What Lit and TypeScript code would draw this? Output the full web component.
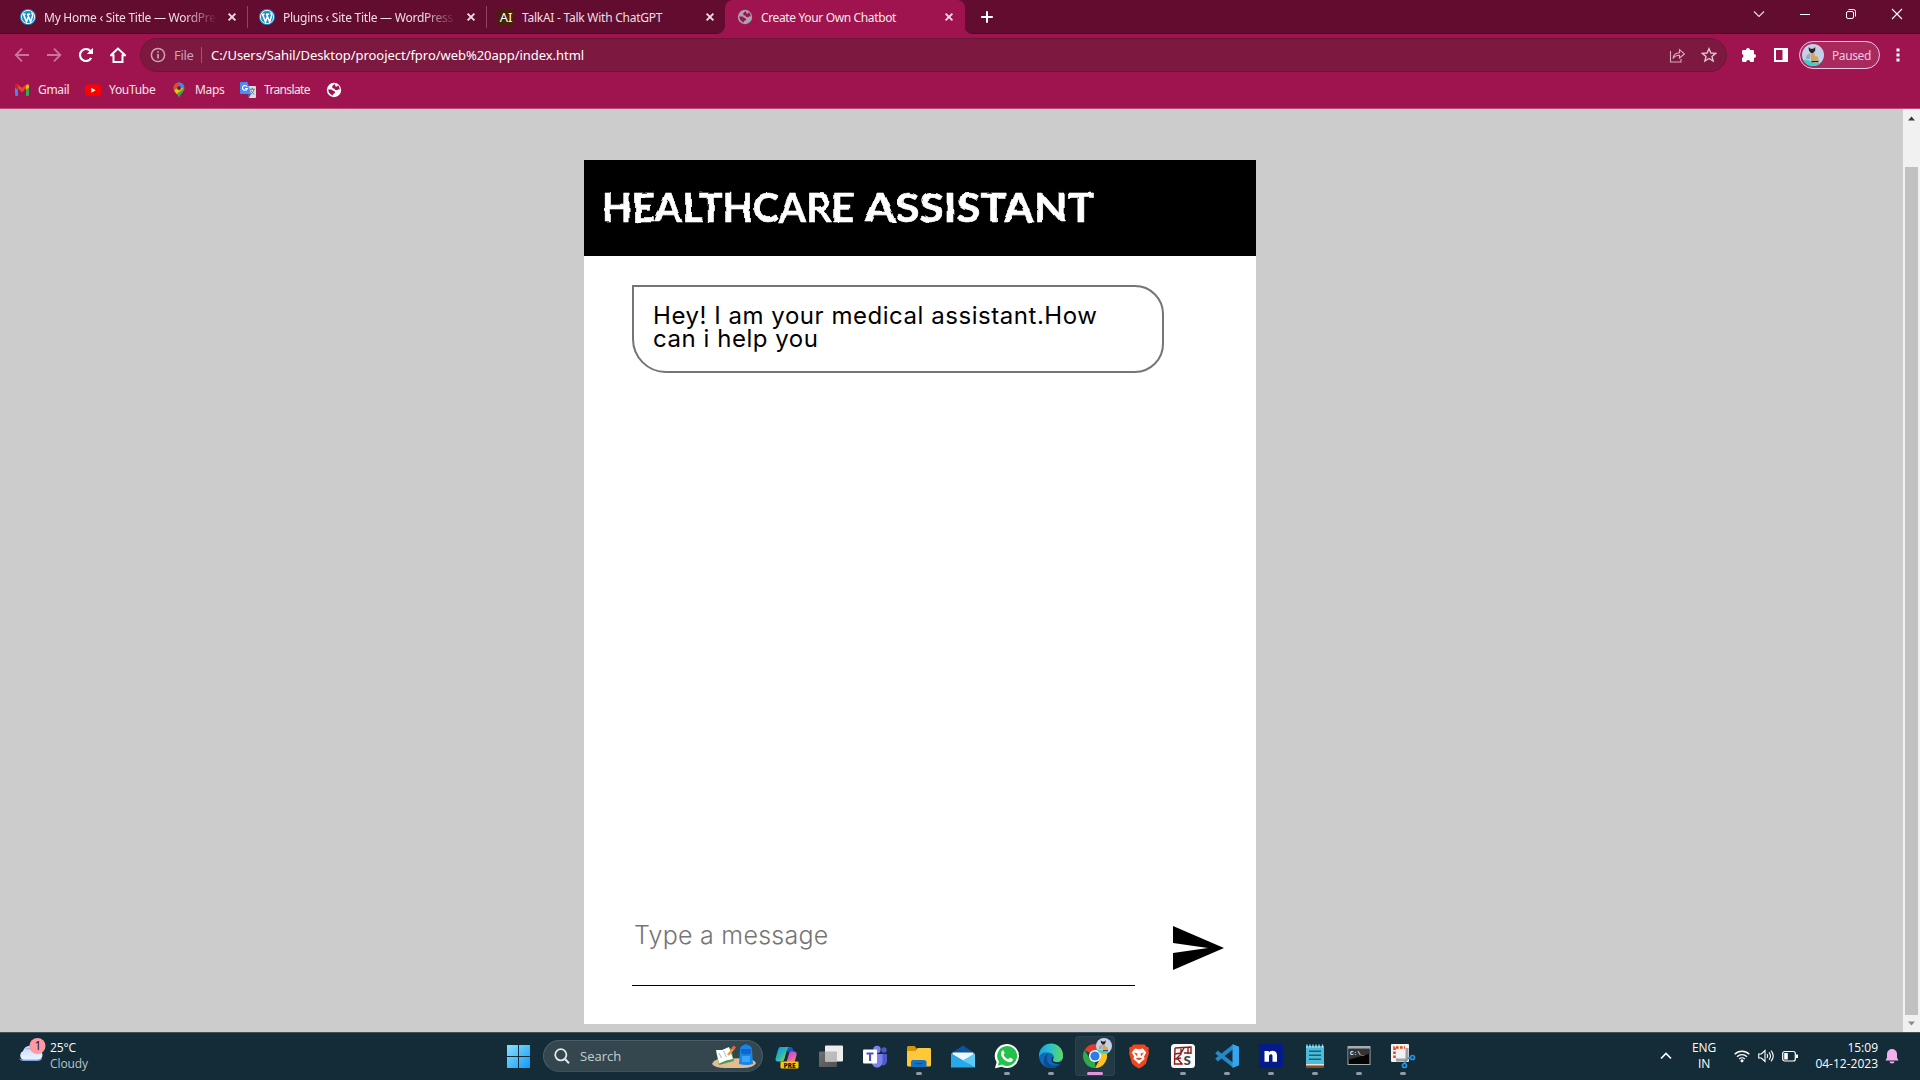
import { LitElement, html, svg, css } from "lit";
import { customElement } from "lit/decorators.js";
import { classMap } from "lit/directives/class-map.js";

const wordpress = html`<svg width="16" height="16" viewBox="0 0 16 16"><circle cx="8" cy="8" r="8" fill="#1d8fc6"/><circle cx="8" cy="8" r="6.600" fill="none" stroke="#fff" stroke-width=".9"/><path d="M2.600 5.200h3M7 5.200h3.200M3.500 5.400l3 7.400 2-5.600M7.600 5.400l3 7.400 2-6c.5-1.600-.9-2-.6-3.300" fill="none" stroke="#fff" stroke-width="1.500"/></svg>`;
const aiIcon = html`<span class="ai">AI</span>`;
const globe = (bg: string, fg: string) => html`<svg width="16" height="16" viewBox="0 0 16 16"><circle cx="8" cy="8" r="7.200" fill="${bg}"/><path fill="${fg}" d="M9.300 2.200C7.600 2.400 6 3.600 6.200 5.200c.1 1 1 1.200 1.900 1.200.6 0 .6 1.400 1.500 1.700.9.300 2 .1 2.600-.5.600-.5 1.300-.4 1.500.2.200-2-.6-3.600-1.900-4.600-.2.900-.7 1.500-1.500 1.400-.9-.1-1.500-.6-1-2.400zM2.200 7.600c.1 3 1.900 5.100 4.600 5.900l.3-1.500c.9-.1 1.900-.8 1.900-1.800 0-.9-.7-1.100-1.500-1.200C6.700 8.900 6.500 7.700 5.200 7.500c-.9-.2-2-.1-3 .1z"/></svg>`;
const closeX = html`<svg class="x" width="16" height="16" viewBox="0 0 16 16"><path d="M4.600 4.600l6.800 6.800M11.400 4.600l-6.800 6.800" stroke="#f3dbe5" stroke-width="1.900"/></svg>`;

const avatar = (s: number) => html`<svg width="${s}" height="${s}" viewBox="0 0 22 22"><defs><clipPath id="av"><circle cx="11" cy="11" r="11"/></clipPath></defs><g clip-path="url(#av)"><path fill="#c5d0e8" d="M0 0h22v22H0z"/><path fill="#3fd0c4" d="M0 16q6-1 10 2t12-1v5H0z"/><path fill="#9aa8c4" d="M4 12l4-3v6H4z"/><path fill="#d0a765" d="M8.500 8h3.500l1 4 2.500.5 1.500 4.500H9z"/><path fill="#28231f" d="M6.500 3l2 1.800h2.800L13.200 3v3.700L11 9H9L7 6.800zM9.500 17h7v1.200h-7z"/></g></svg>`;

const folder = svg`<path fill="#d99409" d="M0 3.500C0 2.500.8 2 1.600 2h6l2 2.500V9H0z"/><path fill="#fdc93b" d="M0 7h8.500l2-3H22.600c.9 0 1.400.6 1.400 1.400V21c0 .8-.6 1.500-1.400 1.500H1.400C.6 22.500 0 21.800 0 21z"/><path fill="#1471c4" d="M4 23v-4.500c0-2 1-2.500 2.500-2.500h10c2 0 3 .7 3 2.500V23z"/><path fill="#0d4f94" d="M8 19h7.500v1.200H8z"/>`;

interface App { name: string; icon: unknown; running?: boolean; active?: boolean }
const apps: App[] = [
  { name: "copilot", icon: svg`<defs><linearGradient id="cp1" x2="1" y2="1"><stop stop-color="#178ee8"/><stop offset=".5" stop-color="#2ab9b0"/><stop offset="1" stop-color="#d9d526"/></linearGradient><linearGradient id="cp2" x2=".6" y2="1"><stop stop-color="#8b50e8"/><stop offset=".6" stop-color="#e65bb5"/><stop offset="1" stop-color="#f78b52"/></linearGradient></defs><path fill="#1856c0" d="M10 3h5.500c1.500 0 2 .8 2.400 2l1 3H13z"/><path fill="url(#cp1)" d="M5.500 3H14c-1.500 1-2 3-2.600 5l-2 7c-.5 1.700-1.200 2.500-3 2.500H2.500C.7 17.500.2 16 .6 14.500L3 6c.5-1.800 1-3 2.500-3z"/><path fill="url(#cp2)" d="M16 7.500h3c2.200 0 3 1.500 2.500 3.500L20 16.500c-.6 2-1.300 3-3 3H9.500c2-1 2.500-3 3-5l1.300-4.500c.4-1.500.8-2.500 2.200-2.500z"/><rect x="5.500" y="17.500" width="18" height="7" rx="1" fill="#fbc40e"/><text x="14.500" y="23.500" text-anchor="middle" font-size="6.600" font-weight="800" fill="#251c04" font-family="Open Sans,sans-serif">PRE</text>` },
  { name: "taskview", icon: svg`<defs><linearGradient id="tv" x2="1" y2="1"><stop stop-color="#6f6f6f"/><stop offset="1" stop-color="#515151"/></linearGradient></defs><rect x="0" y="7.500" width="18" height="15.500" rx="1" fill="url(#tv)"/><rect x="6" y="1.500" width="18" height="16" rx="1" fill="#ededed"/><path fill="#bcbcbc" d="M6 7.500h12v10H6z"/>` },
  { name: "teams", icon: svg`<circle cx="21" cy="6" r="2.700" fill="#5059c9"/><circle cx="14" cy="5.500" r="3.700" fill="#7b83eb"/><path fill="#5059c9" d="M17 10h7v6.500c0 3-2 5-5 5z"/><path fill="#7b83eb" d="M9 10h10.500v7.500c0 3.500-2.300 6-5.500 6s-5-2.500-5-5z"/><rect y="5.500" width="14" height="14" rx="1" fill="#fff"/><path fill="#4b53bc" d="M3.500 8.500h7v1.900H8.100V17H6v-6.600H3.500z"/>` },
  { name: "explorer", icon: folder, running: true },
  { name: "mail", icon: svg`<path fill="#0a559e" d="M0 9.500L12 1.500l12 8v4H0z"/><path fill="#f2f7fb" d="M1.500 8.500h21v2L12 17.500 1.500 10.500z"/><path fill="#1683d8" d="M0 9.500l12 7L0 23.500z"/><path fill="#28a8ea" d="M0 9.500L24 23.500H0z"/><path fill="#5cccf5" d="M24 9.500v14L11.500 16.500z"/>` },
  { name: "whatsapp", icon: svg`<path fill="#fff" d="M12 0a12 12 0 0 1 0 24c-2 0-3.700-.4-5.300-1.200L0 24.300l1.600-6A12 12 0 0 1 12 0z"/><path fill="#25c04c" d="M12 2a10 10 0 1 1-5 18.600L2.800 21.700l1.200-4A10 10 0 0 1 12 2z"/><path fill="#fff" d="M8.500 6.200l1.200 3-1.200 1.500c1 2 2.500 3.500 4.800 4.600l1.500-1.700 3.200 1.500c0 2-1.400 3.100-3.200 3.100-4-.3-8.800-5-8.800-8.800 0-1.800 1.100-3.100 2.500-3.200z"/>`, running: true },
  { name: "edge", icon: svg`<defs><linearGradient id="eg" x2="1"><stop stop-color="#1aa0dd"/><stop offset=".5" stop-color="#2cc3c7"/><stop offset="1" stop-color="#63d957"/></linearGradient></defs><circle cx="12" cy="12" r="12" fill="#0d69b9"/><path fill="#124a91" d="M10 9c-4 3-3 12 5 12.500 3 .2 6-1 7.500-2.500A12 12 0 0 1 8 23C3 20 4 11 10 9z"/><path fill="url(#eg)" d="M0 11A12 12 0 0 1 24 12c0 4-3 6-6.500 6-2.500 0-4-.8-3.500-2 2-2 1-7-5-7.500C4 8 1 10 0 13z"/><path fill="#142b38" d="M14 15c-1.200 1.500 1 3.500 4.500 3.300 2-.1 3.500-.8 4.400-1.400-.6 1.500-1.400 2.600-2.100 3.100-4 .8-8.500-1-8.300-4.500.1-1.200.8-2.500 1.700-3z"/>`, running: true },
  { name: "chrome", icon: svg`<path fill="#e23c2e" d="M12 12L1.600 6a12 12 0 0 1 20.800 0z"/><path fill="#fcc31e" d="M12 12V6h10.400A12 12 0 0 1 12 24l5-9z"/><path fill="#2da94f" d="M1.600 6L7 15l5 3 .5 6A12 12 0 0 1 1.600 6z"/><circle cx="12" cy="12" r="6" fill="#fff"/><circle cx="12" cy="12" r="4.600" fill="#2b7de9"/>`, active: true },
  { name: "brave", icon: svg`<path fill="#f4461e" d="M6.500.5h11l2 2.300 2.300.6-.3 4 .5 1.500-3 10.500c-.4 1-5.500 4.400-7 5-1.500-.6-6.600-4-7-5L2 8.900l.5-1.500-.3-4 2.300-.6z"/><path fill="#fff" d="M8 4.500l4 .8 4-.8 3.200 4-2.200 4 .5 2.500-3 2.500-2.500 2.500-2.500-2.500-3-2.500.5-2.500-2.200-4z"/><path fill="#f4461e" d="M7 8.500l3.500 1-.5 3zM17 8.500l-3.500 1 .5 3zM8.500 14.500l3.500-1 3.500 1-3.500 1.800z"/>` },
  { name: "spyder", icon: svg`<rect width="24" height="24" rx="3.500" fill="#fafafa"/><path d="M4 4l16-1v7M4 4l-.5 16H12M4 10l6-1 3-5M4 15l6-1M10 3v7l-4 4 5 6M13 9l7 0M17 3v7" stroke="#8c1d1d" stroke-width="1.400" fill="none"/><text x="12.500" y="20.500" font-family="Lato,sans-serif" font-size="17" font-weight="700" fill="#41494c" stroke="#fafafa" stroke-width="2" paint-order="stroke">s</text>`, running: true },
  { name: "vscode", icon: svg`<path d="M1.500 8l17 13.500M1.500 16L18.500 2.500" stroke="#2489ca" stroke-width="4"/><path fill="#35a5ef" d="M17.500 0L24 2.800v18.400L17.500 24z"/>`, running: true },
  { name: "ngrok", icon: svg`<rect width="24" height="24" fill="#051b8c"/><path fill="#fff" d="M5.500 7h4.300v1.500C11.200 6.500 14 6.300 15.800 7.200c1.700.8 2.200 2.300 2.200 4.300v6.300h-4.500v-5.500c0-2.700-3.500-2.600-3.500.2v5.300H5.500z"/>`, running: true },
  { name: "notepad", icon: svg`<path fill="#8a4b1f" d="M3 19h18v4.500c0 .3-.3.500-.6.500H3.600c-.3 0-.6-.2-.6-.5z"/><path fill="#e5e3dc" d="M3 19h18v2.500H3z"/><path fill="#4ebbd8" d="M3 2h18v18H3z"/><path d="M4 .5v3.500M7 .5v3.500M10 .5v3.500M13 .5v3.500M16 .5v3.500M19.500 .5v3.500" stroke="#9ce4f2" stroke-width="1.300"/><path d="M6 7.200h12M6 11.200h12M6 15.200h12" stroke="#0d6577" stroke-width="1.400"/>`, running: true },
  { name: "cmd", icon: svg`<rect x=".5" y="2" width="23" height="19" fill="#a6adb1"/><path fill="#050505" d="M1.500 4.800h21V20h-21z"/><path fill="#343434" d="M1.500 4.800h21v5l-21 6z"/><text x="3" y="11.200" font-family="Liberation Mono,monospace" font-size="6" font-weight="700" fill="#fff">C:\\_</text>`, running: true },
  { name: "snip", icon: svg`<rect x="0" y="0" width="18" height="18" rx="1" fill="#f1f1f1"/><path d="M3.500 14V3.500H14" stroke="#e24a1c" stroke-width="2.600" stroke-dasharray="2.600 1.400" fill="none"/><path d="M16 4v10c0 1.500-.5 2-2 2H5" stroke="#9aa0a4" stroke-width="3" fill="none"/><circle cx="13.500" cy="21.500" r="2" fill="none" stroke="#2494e0" stroke-width="1.700"/><circle cx="21.500" cy="13.500" r="2" fill="none" stroke="#2494e0" stroke-width="1.700"/><path d="M13.500 19.500l1.500-3M19.500 13.500l-3 1" stroke="#2494e0" stroke-width="1.700"/>`, running: true },
];

@customElement("browser-tabs")
class BrowserTabs extends LitElement {
  static styles = css`
    :host { display: flex; height: 34px; box-sizing: border-box; background: #620d2f; padding-left: 9px; box-shadow: inset 0 -1px #500726; font: 12px "Noto Sans", sans-serif; color: #f0dde5; }
    .tab { width: 239px; flex: none; box-sizing: border-box; display: flex; align-items: center; padding: 0 0 0 11px; border-right: 1px solid transparent; }
    .tab.line { border-image: linear-gradient(transparent 7px, #8e4565 7px 27px, transparent 27px) 1; }
    .label { width: 171px; flex: none; margin-left: 8px; white-space: nowrap; overflow: hidden; letter-spacing: -0.25px; }
    .fade { mask-image: linear-gradient(90deg, #000 140px, transparent 173px); }
    .x { margin-left: 9px; }
    svg { flex: none; display: block; }
    .active { width: 240px; margin-left: -1px; padding-left: 12px; background: #9f144e; border-radius: 8px 8px 0 0; color: #f8e9ef; position: relative; }
    .active .label { letter-spacing: -0.36px; }
    .active::before, .active::after { content: ""; position: absolute; bottom: 0; width: 8px; height: 8px; }
    .active::before { left: -8px; background: radial-gradient(circle at 0 0, transparent 7.5px, #9f144e 8px); }
    .active::after { right: -8px; background: radial-gradient(circle at 100% 0, transparent 7.500px, #9f144e 8px); }
    .ai { width: 16px; height: 16px; flex: none; background: #4b2106; color: #fff; font: 13px/16px "Noto Sans", sans-serif; text-align: center; }
    .plus { margin: 9px 0 0 14px; }
    .win { margin-left: auto; display: flex; padding: 6px 15px 0 0; gap: 30px; }
  `;
  render() {
    const tabs = [
      { t: "My Home ‹ Site Title — WordPress.com", i: wordpress, c: { line: true } },
      { t: "Plugins ‹ Site Title — WordPress.com", i: wordpress, c: { line: true } },
      { t: "TalkAI - Talk With ChatGPT", i: aiIcon, c: { line: false } },
      { t: "Create Your Own Chatbot", i: globe("#a6a3ab", "#9f144e"), c: { active: true } },
    ];
    return html`
      ${tabs.map((t, n) => html`<div class=${classMap({ tab: true, ...t.c } as any)}>${t.i}<span class=${classMap({ label: true, fade: n < 2 })}>${t.t}</span>${closeX}</div>`)}
      <svg class="plus" width="16" height="16" viewBox="0 0 16 16"><path d="M8 2.200v11.600M2.200 8h11.600" stroke="#fff" stroke-width="2"/></svg>
      <div class="win">
        <svg width="16" height="16" viewBox="0 0 16 16"><path d="M3 5.500l5 5 5-5" stroke="#f0dde5" stroke-width="1.100" fill="none"/></svg>
        <svg width="16" height="16" viewBox="0 0 16 16"><path d="M3 8.500h10" stroke="#fff"/></svg>
        <svg width="16" height="16" viewBox="0 0 16 16"><rect x="3.500" y="5.500" width="7" height="7" rx="1.500" stroke="#fff" fill="none"/><path d="M5.500 3.500h5q2 0 2 2v5" stroke="#fff" fill="none"/></svg>
        <svg width="16" height="16" viewBox="0 0 16 16"><path d="M3 3l10 10M13 3L3 13" stroke="#fff" stroke-width="1.100"/></svg>
      </div>`;
  }
}

@customElement("browser-toolbar")
class BrowserToolbar extends LitElement {
  static styles = css`
    :host { display: block; height: 75px; box-sizing: border-box; background: #9f144e; border-bottom: 1px solid #bd4a77; font-family: "Noto Sans", sans-serif; color: #fff; }
    svg { display: block; flex: none; }
    .bar { height: 42px; display: flex; align-items: center; box-sizing: border-box; padding: 0 13px 0 14px; }
    .nav { display: flex; flex: none; gap: 16px; width: 126px; }
    .omni { width: 1587px; flex: none; height: 34px; border-radius: 17px; box-sizing: border-box; background: #7d1940; border: 1px solid #6f1439; display: flex; align-items: center; padding: 0 9px; }
    .file { width: 20px; margin-left: 8px; font-size: 13px; color: #c9a3b3; letter-spacing: -0.3px; }
    .sep { width: 1px; height: 16px; background: #a35575; margin: 0 9px 0 7px; }
    .url { font-size: 13px; letter-spacing: -0.04px; flex: 1; white-space: nowrap; }
    .acts { display: flex; gap: 16px; }
    .ext { display: flex; flex: none; gap: 16px; margin-left: 14px; }
    .profile { width: 81px; flex: none; height: 28px; margin-left: 10px; box-sizing: border-box; border: 1px solid #ecc6e8; border-radius: 14px; background: #a82a5c; display: flex; align-items: center; padding-left: 2px; font-size: 12px; color: #f1c5e6; gap: 8px; letter-spacing: -0.4px; }
    .dots { margin-left: 10px; }
    .marks { height: 27px; display: flex; align-items: center; font-size: 12px; padding-left: 14px; color: #f6e4eb; }
    .mark { display: flex; align-items: center; gap: 8px; letter-spacing: -0.3px; }
    .gmail { width: 71px; } .yt { width: 86px; } .maps { width: 69px; } .tr { width: 86px; letter-spacing: -0.65px; }
  `;
  render() {
    return html`
      <div class="bar">
        <div class="nav">
          <svg width="16" height="16" viewBox="0 0 16 16"><path d="M15 8H2M8 1.700L1.700 8 8 14.300" stroke="#cc7399" stroke-width="1.800" fill="none"/></svg>
          <svg width="16" height="16" viewBox="0 0 16 16"><path d="M1 8h13M8 1.700L14.300 8 8 14.300" stroke="#cc7399" stroke-width="1.800" fill="none"/></svg>
          <svg width="16" height="16" viewBox="0 0 16 16"><path d="M13.200 11A6 6 0 1 1 12.500 4" stroke="#fff" stroke-width="2.200" fill="none"/><path d="M15 .8V7H8.800z" fill="#fff"/></svg>
          <svg width="16" height="16" viewBox="0 0 16 16"><path d="M8 1.600L1 8.200h2.500V15h9V8.200H15z" stroke="#fff" stroke-width="2" fill="none"/></svg>
        </div>
        <div class="omni">
          <svg width="16" height="16" viewBox="0 0 16 16"><circle cx="8" cy="8" r="6.600" stroke="#c9a3b3" stroke-width="1.500" fill="none"/><path d="M8 7v4.500M8 4.200v1.600" stroke="#c9a3b3" stroke-width="1.700"/></svg>
          <span class="file">File</span><span class="sep"></span>
          <span class="url">C:/Users/Sahil/Desktop/prooject/fpro/web%20app/index.html</span>
          <div class="acts">
            <svg width="16" height="16" viewBox="0 0 16 16"><path d="M1.500 4v11h10.500v-3M4 11.500c.5-4 3-5.500 6.500-5.700V2.700L15.500 7l-5 4V8.200C7.500 8.200 5.500 9 4 11.500z" stroke="#d3b0be" stroke-width="1.100" fill="none"/></svg>
            <svg width="16" height="16" viewBox="0 0 16 16"><path d="M8 1.700l1.900 4.300 4.700.4-3.600 3 1.100 4.600L8 11.500 3.900 14 5 9.400l-3.600-3 4.700-.4z" stroke="#e0c4cf" stroke-width="1.400" fill="none"/></svg>
          </div>
        </div>
        <div class="ext">
          <svg width="16" height="16" viewBox="0 0 16 16"><path d="M1 4.200q0-1.200 1.200-1.200H5a2 2 0 0 1 4 0h2.800Q13 3 13 4.200V7a2 2 0 0 1 0 4v2.800q0 1.200-1.200 1.200H9.200a2 2 0 0 0-4 0h-3Q1 15 1 13.800V11a2.100 2.100 0 0 0 0-4z" fill="#fff"/></svg>
          <svg width="16" height="16" viewBox="0 0 16 16"><path fill-rule="evenodd" d="M1 1h14v14H1zM3 3v10h6.500V3z" fill="#fff"/></svg>
        </div>
        <div class="profile">${avatar(22)}<span>Paused</span></div>
        <svg class="dots" width="16" height="16" viewBox="0 0 16 16"><path d="M6.500 1.500h3v3h-3zM6.500 6.500h3v3h-3zM6.500 11.500h3v3h-3z" fill="#fff"/></svg>
      </div>
      <div class="marks">
        <div class="mark gmail"><svg width="16" height="16" viewBox="0 0 16 16"><path fill="#4285f4" d="M1 5l3 2v7H2.200Q1 14 1 12.800z"/><path fill="#34a853" d="M15 5l-3 2v7h1.800q1.200 0 1.200-1.200z"/><path fill="#ea4335" d="M1 3.500C1.300 2 3 2 4 2.800l4 3 4-3c1-.8 2.700-.8 3 .7L8 10.300z"/><path fill="#fbbc04" d="M12 3.500l1.500-1.100Q15 2.300 15 4v1.500l-3 2.200z"/><path fill="#c5221f" d="M1 4q0-1.700 1.500-1.600L4 3.500v4.200L1 5.500z"/></svg>Gmail</div>
        <div class="mark yt"><svg width="16" height="16" viewBox="0 0 16 16"><rect y="2.500" width="16" height="11.300" rx="3" fill="#f00"/><path d="M6.300 5.700v5l4.300-2.500z" fill="#fff"/></svg>YouTube</div>
        <div class="mark maps"><svg width="16" height="16" viewBox="0 0 16 16"><path fill="#34a853" d="M8 16C7.400 12.500 2.500 10 2.500 6A5.500 5.500 0 0 1 13.500 6c0 4-4.900 6.500-5.500 10z"/><path fill="#fbbc04" d="M3.200 8.500L10 3l2 4-6.500 5z"/><path fill="#4285f4" d="M7 .6a5.500 5.500 0 0 1 6 3L8 8 5 4z"/><path fill="#ea4335" d="M3.700 2.600A5 5 0 0 1 7 .6l1.500 2-5.700 5q-.8-2.800.9-5z"/><circle cx="8" cy="6" r="2" fill="#7d1940"/></svg>Maps</div>
        <div class="mark tr"><svg width="16" height="16" viewBox="0 0 16 16"><path fill="#dcdcdc" d="M7 4h8q1 0 1 1v10q0 1-1 1H9z"/><path fill="#4a8bf5" d="M1 0h6.500l3.500 12H1q-1 0-1-1V1q0-1 1-1z"/><path fill="#2a57b5" d="M8 12h3l-2 3.500z"/><path d="M7 4.700A2.400 2.400 0 1 0 7.200 6.500H5" stroke="#fff" stroke-width="1.200" fill="none"/><path d="M9.800 7.200h5M12.300 6v1.200M14 7.400c-.4 2-2 4-3 4.800M11 8.500c.5 1.500 2 3 3.400 3.800" stroke="#607d8b" fill="none"/></svg>Translate</div>
        ${globe("#fff", "#9f144e")}
      </div>`;
  }
}

@customElement("chat-page")
class ChatPage extends LitElement {
  static styles = css`
    :host { display: flex; flex: 1; min-height: 0; background: #ccc; font-family: Inter, sans-serif; }
    .page { flex: 1; padding: 51px 0 8px 584px; box-sizing: border-box; }
    .chat { width: 672px; height: 864px; background: #fff; display: flex; flex-direction: column; }
    header { height: 96px; background: #000; }
    h1 { margin: 0; }
    .title { display: block; font: 700 41px Lato, sans-serif; fill: #fff; stroke: #fff; stroke-width: .6px; stroke-linejoin: round; }
    .messages { flex: 1; padding: 29px 0 0 48px; }
    .bubble { width: 532px; height: 88px; box-sizing: border-box; border: 2px solid #757575; border-radius: 0 29px 29px 34px; padding: 17px 19px; font-size: 24px; line-height: 23px; letter-spacing: 0.54px; color: #000; white-space: nowrap; }
    .compose { height: 104px; display: flex; padding-left: 48px; }
    .field { width: 503px; height: 66px; box-sizing: border-box; border-bottom: 1px solid #000; color: #757575; font-size: 25px; font-weight: 300; line-height: 30px; letter-spacing: 0.25px; padding: 0 0 0 2px; }
    .send { margin: 6px 0 0 38px; }
    .scroll { width: 17px; background: #f1f1f1; display: flex; flex-direction: column; align-items: center; }
    .thumb { width: 13px; height: 848px; margin-top: 46px; background: #c1c1c1; }
    .arrow { margin-top: 6px; }
    .scroll svg { display: block; }
  `;
  render() {
    return html`
      <div class="page"><div class="chat">
        <header><h1><svg class="title" width="672" height="96" viewBox="0 0 672 96">
          <filter id="rough" x="-2%" y="-10%" width="104%" height="120%"><feTurbulence type="fractalNoise" baseFrequency=".09" numOctaves="1" seed="4" result="n"/><feDisplacementMap in="SourceGraphic" in2="n" scale="3.500" xChannelSelector="R" yChannelSelector="G"/></filter>
          <g filter="url(#rough)">
            <text x="18" y="62" textLength="252" lengthAdjust="spacingAndGlyphs">HEALTHCARE</text>
            <text x="281" y="62" textLength="229" lengthAdjust="spacingAndGlyphs">ASSISTANT</text>
          </g>
        </svg></h1></header>
        <div class="messages"><div class="bubble">Hey! I am your medical assistant.How<br>can i help you</div></div>
        <div class="compose">
          <div class="field">Type a message</div>
          <svg class="send" width="52" height="44" viewBox="0 0 52 44"><path d="M0 0l51 22L0 44V27l35-5L0 17z"/></svg>
        </div>
      </div></div>
      <div class="scroll">
        <svg class="arrow" width="9" height="6" viewBox="0 0 9 6"><path d="M1 5.500h7L4.500 1.500z" fill="#3a3a3a"/></svg>
        <div class="thumb"></div>
        <svg class="arrow" width="9" height="6" viewBox="0 0 9 6"><path d="M1 .5h7l-3.500 4z" fill="#8b8b8b"/></svg>
      </div>`;
  }
}

@customElement("task-bar")
class TaskBar extends LitElement {
  static styles = css`
    :host { display: flex; height: 48px; box-sizing: border-box; background: #142b38; border-top: 1px solid #40535d; font: 12px/16px "Open Sans", sans-serif; color: #fff; }
    svg { display: block; flex: none; overflow: visible; }
    .weather { width: 489px; display: flex; gap: 6px; padding: 7px 0 0 18px; letter-spacing: -0.1px; }
    .muted { color: #b9c3c8; }
    .start { margin: 12px 13px 0 0; }
    .search { width: 220px; height: 32px; margin-top: 7px; box-sizing: border-box; border-radius: 16px; background: #34474f; border: 1px solid #4b5e68; border-bottom-color: #3c505a; display: flex; align-items: center; padding: 0 5px 0 10px; font-size: 13px; color: #c6ced2; }
    .search span { margin-left: 10px; flex: 1; }
    .apps { display: flex; gap: 4px; margin: 3px 0 0 4px; }
    .app { width: 40px; height: 40px; border-radius: 4px; display: flex; flex-direction: column; align-items: center; box-sizing: border-box; padding-top: 8px; position: relative; }
    .app.active { background: #233944; box-shadow: inset 0 0 0 1px #2c424d; }
    .dot { width: 6px; height: 3px; margin-top: 4px; border-radius: 2px; background: #929ca1; }
    .app.active .dot { width: 16px; background: #e494dc; }
    .badge { position: absolute; right: 3px; top: 2px; border-radius: 50%; }
    .tray { margin-left: auto; display: flex; padding: 7px 21px 0 0; }
    .tray svg { margin-top: 8px; }
    .lang { width: 28px; text-align: center; margin: 0 16px 0 18px; letter-spacing: -0.2px; }
    .sys { display: flex; gap: 8px; }
    .clock { width: 80px; text-align: right; margin-right: 7px; white-space: nowrap; }
  `;
  render() {
    return html`
      <div class="weather">
        <svg width="26" height="26" viewBox="0 0 26 26"><defs><linearGradient id="cl" x2="0" y2="1"><stop stop-color="#bfd4f8"/><stop offset="1" stop-color="#f0f5ff"/></linearGradient></defs><path d="M5 20a5 5 0 0 1 0-9 7.500 7.500 0 0 1 14-1 5 5 0 0 1 1 10z" fill="url(#cl)"/><path d="M8 9q4-2 6 2" stroke="#8eaee5" fill="none"/><path d="M1 18q1 3 4.500 3h14q4 0 5-3-2 1.600-4 1.600H5Q2.500 19.600 1 18z" fill="#7ca4e8"/><circle cx="19.500" cy="6" r="8" fill="#ff99a4"/><text x="20" y="10" text-anchor="middle" font-size="12" fill="#1a1214">1</text></svg>
        <div>25°C<br><span class="muted">Cloudy</span></div>
      </div>
      <svg class="start" width="23" height="23" viewBox="0 0 23 23"><defs><linearGradient id="ws" gradientUnits="userSpaceOnUse" x2="23" y2="23"><stop stop-color="#8be0fe"/><stop offset="1" stop-color="#0d9bf8"/></linearGradient></defs><path fill="url(#ws)" d="M0 0h11v11H0zM12 0h11v11H12zM0 12h11v11H0zM12 12h11v11H12z"/></svg>
      <div class="search">
        <svg width="16" height="16" viewBox="0 0 16 16"><circle cx="6.800" cy="6.800" r="5.600" stroke="#e1e6e8" stroke-width="1.800" fill="none"/><path d="M11 11l4 4.200" stroke="#e1e6e8" stroke-width="2"/></svg>
        <span>Search</span>
        <svg width="46" height="26" viewBox="0 0 46 26"><path fill="#e1bd91" d="M1 21q2-5 9-5l24-1q9 1 11 5-2 5-14 5H14q-10 0-13-4z"/><path fill="#4d9a55" d="M5 9l15-4 3 13-15 4z"/><path fill="#fff" d="M5 7l6 0 7-3 4 12-7 1.500-7 3z"/><path d="M8 10l2.500 5M12.500 8l3 6" stroke="#97a1a9" stroke-width=".8"/><path d="M17 12l6-7" stroke="#f29a30" stroke-width="2.600"/><path d="M21.500 6l2.500-2.500" stroke="#ed5d52" stroke-width="3"/><path d="M33 3q2-3 4 0" stroke="#1a72d6" stroke-width="1.500" fill="none"/><path fill="#1685ec" d="M29 7q0-5 6-5t6 5l1 14q-6 2-14 0z"/><path fill="#1165c8" d="M30 6h10v4q-5 3-10 0z"/><path fill="#38a5f8" d="M31 13h8v6h-8z"/></svg>
      </div>
      <div class="apps">
        ${apps.map(a => html`<div class=${classMap({ app: true, active: !!a.active })}>
          <svg width="24" height="24" viewBox="0 0 24 24">${a.icon}</svg>
          ${a.running || a.active ? html`<span class="dot"></span>` : ""}
          ${a.active ? html`<span class="badge">${avatar(16)}</span>` : ""}
        </div>`)}
      </div>
      <div class="tray">
        <svg width="12" height="16" viewBox="0 0 12 16"><path d="M1 10.500l5-5 5 5" stroke="#fff" stroke-width="1.600" fill="none"/></svg>
        <div class="lang">ENG<br>IN</div>
        <div class="sys">
          <svg width="16" height="16" viewBox="0 0 16 16"><path d="M.7 6.200a10.500 10.500 0 0 1 14.600 0M3 8.700a7.200 7.200 0 0 1 10 0M5.200 11a4 4 0 0 1 5.600 0" stroke="#fff" stroke-width="1.300" fill="none"/><circle cx="8" cy="12.800" r="1.500" fill="#fff"/></svg>
          <svg width="16" height="16" viewBox="0 0 16 16"><path d="M.7 6h2.600L7 2.500v11L3.300 10H.7zM9 6q1.500 2 0 4M11 4.300q3 3.700 0 7.400M13 2.700q4.500 5.300 0 10.600" stroke="#fff" stroke-width="1.100" fill="none"/></svg>
          <svg width="16" height="16" viewBox="0 0 16 16"><rect x=".7" y="3.500" width="12.600" height="9.500" rx="2" stroke="#fff" stroke-width="1.200" fill="none"/><path d="M2.200 5h3.600v6.500H2.200zM14 6.500h2v3.500h-2z" fill="#fff"/></svg>
        </div>
        <div class="clock">15:09<br>04-12-2023</div>
        <svg width="14" height="16" viewBox="0 0 14 16"><path d="M.5 12.500L2 9.500V6a5 5 0 0 1 10 0v3.500l1.500 3zM4.500 13.500h5a2.500 2 0 0 1-5 0z" fill="#f3b1ec"/></svg>
      </div>`;
  }
}

@customElement("app-root")
class AppRoot extends LitElement {
  static styles = css`
    :host { display: flex; flex-direction: column; width: 1920px; height: 1080px; overflow: hidden; }
    chat-page { flex: 1; }
  `;
  render() {
    return html`<browser-tabs></browser-tabs><browser-toolbar></browser-toolbar><chat-page></chat-page><task-bar></task-bar>`;
  }
}
